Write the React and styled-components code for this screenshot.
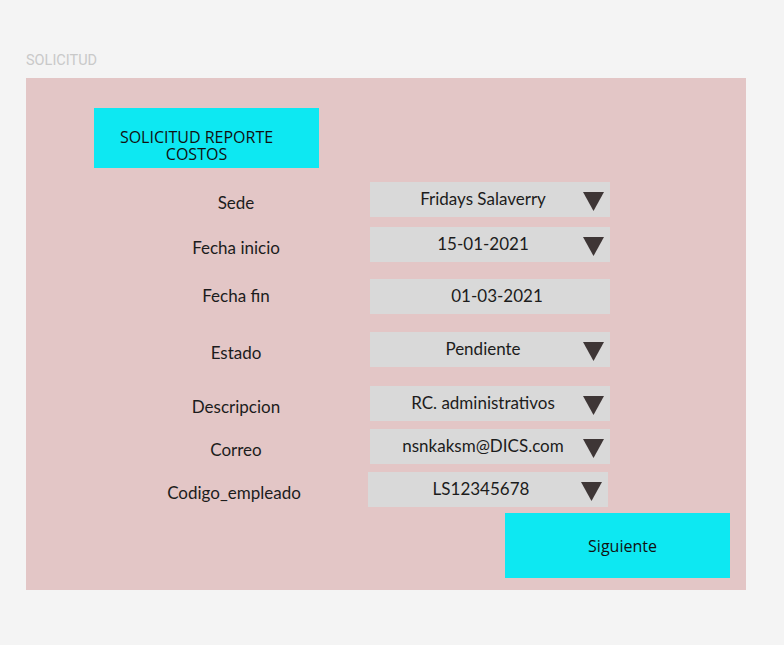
import React from 'react';
import styled, { createGlobalStyle } from 'styled-components';

const GlobalStyle = createGlobalStyle`
  html, body {
    margin: 0;
    padding: 0;
    background: #f4f4f4;
  }
`;

const Page = styled.div`
  width: 784px;
  height: 645px;
  padding: 52px 0 0 26px;
  box-sizing: border-box;
  background: #f4f4f4;
`;

const PageTitle = styled.div`
  font-family: Roboto, "Liberation Sans", sans-serif;
  font-size: 14.5px;
  line-height: 17px;
  color: #c9c9c9;
  height: 26px;
`;

const Panel = styled.div`
  width: 720px;
  height: 512px;
  box-sizing: border-box;
  background: #e3c6c6;
  padding: 30px 16px 13px 68px;
  display: flex;
  flex-direction: column;
`;

const Header = styled.div`
  width: 225px;
  height: 60px;
  flex-shrink: 0;
  box-sizing: border-box;
  background: #0de8f2;
  display: flex;
  flex-direction: column;
  align-items: center;
  justify-content: center;
  padding: 16px 20px 0 0;
  font-family: "Open Sans", "Noto Sans", sans-serif;
  font-size: 16px;
  line-height: 17.5px;
  color: #111;
  text-align: center;
`;

const Form = styled.div`
  display: flex;
  flex-direction: column;
  margin-left: 46px;
  margin-top: 14px;
`;

const Row = styled.div`
  display: grid;
  grid-template-columns: 192px 240px;
  column-gap: 38px;
  margin-top: ${p => p.gap || 0}px;
  margin-left: ${p => p.shift || 0}px;
`;

const Label = styled.div`
  font-family: Lato, "Noto Sans", sans-serif;
  font-size: 17px;
  color: #1c1c1c;
  text-align: center;
  align-self: center;
  padding-top: ${p => p.lift ? 0 : 5}px;
  margin-top: ${p => p.lift ? -3 : 0}px;
`;

const Select = styled.div`
  height: 35px;
  box-sizing: border-box;
  background: #d9d9d9;
  display: flex;
  align-items: center;
  padding: 0 6px 0 ${p => p.plain ? 20 : 0}px;
  font-family: Lato, "Noto Sans", sans-serif;
  font-size: 17px;
  color: #1c1c1c;
`;

const Value = styled.span`
  flex: 1;
  text-align: center;
  margin-top: -2px;
`;

const Arrow = styled.svg`
  width: 21px;
  height: 19px;
  margin-left: -13px;
  margin-top: 3px;
  flex-shrink: 0;
`;

const Footer = styled.div`
  display: flex;
  justify-content: flex-end;
  margin-top: 6px;
`;

const NextButton = styled.button`
  width: 225px;
  height: 65px;
  border: none;
  background: #0de8f2;
  font-family: "Open Sans", "Noto Sans", sans-serif;
  font-size: 16px;
  color: #111;
  padding: 1px 0 0 10px;
`;

const fields = [
  { label: 'Sede', value: 'Fridays Salaverry', gap: 0 },
  { label: 'Fecha inicio', value: '15-01-2021', gap: 10 },
  { label: 'Fecha fin', value: '01-03-2021', gap: 17, plain: true, lift: true },
  { label: 'Estado', value: 'Pendiente', gap: 18 },
  { label: 'Descripcion', value: 'RC. administrativos', gap: 19 },
  { label: 'Correo', value: 'nsnkaksm@DICS.com', gap: 8 },
  { label: 'Codigo_empleado', value: 'LS12345678', gap: 8, shift: -2 },
];

const Triangle = () => (
  <Arrow viewBox="0 0 21 19">
    <polygon points="0,0 21,0 10.5,19" fill="#3e3636" />
  </Arrow>
);

export default function App() {
  return (
    <Page>
      <GlobalStyle />
      <PageTitle>SOLICITUD</PageTitle>
      <Panel>
        <Header>
          <span>SOLICITUD REPORTE</span>
          <span>COSTOS</span>
        </Header>
        <Form>
          {fields.map(f => (
            <Row key={f.label} gap={f.gap} shift={f.shift}>
              <Label lift={f.lift}>{f.label}</Label>
              <Select plain={f.plain}>
                <Value>{f.value}</Value>
                {!f.plain && <Triangle />}
              </Select>
            </Row>
          ))}
        </Form>
        <Footer>
          <NextButton>Siguiente</NextButton>
        </Footer>
      </Panel>
    </Page>
  );
}
